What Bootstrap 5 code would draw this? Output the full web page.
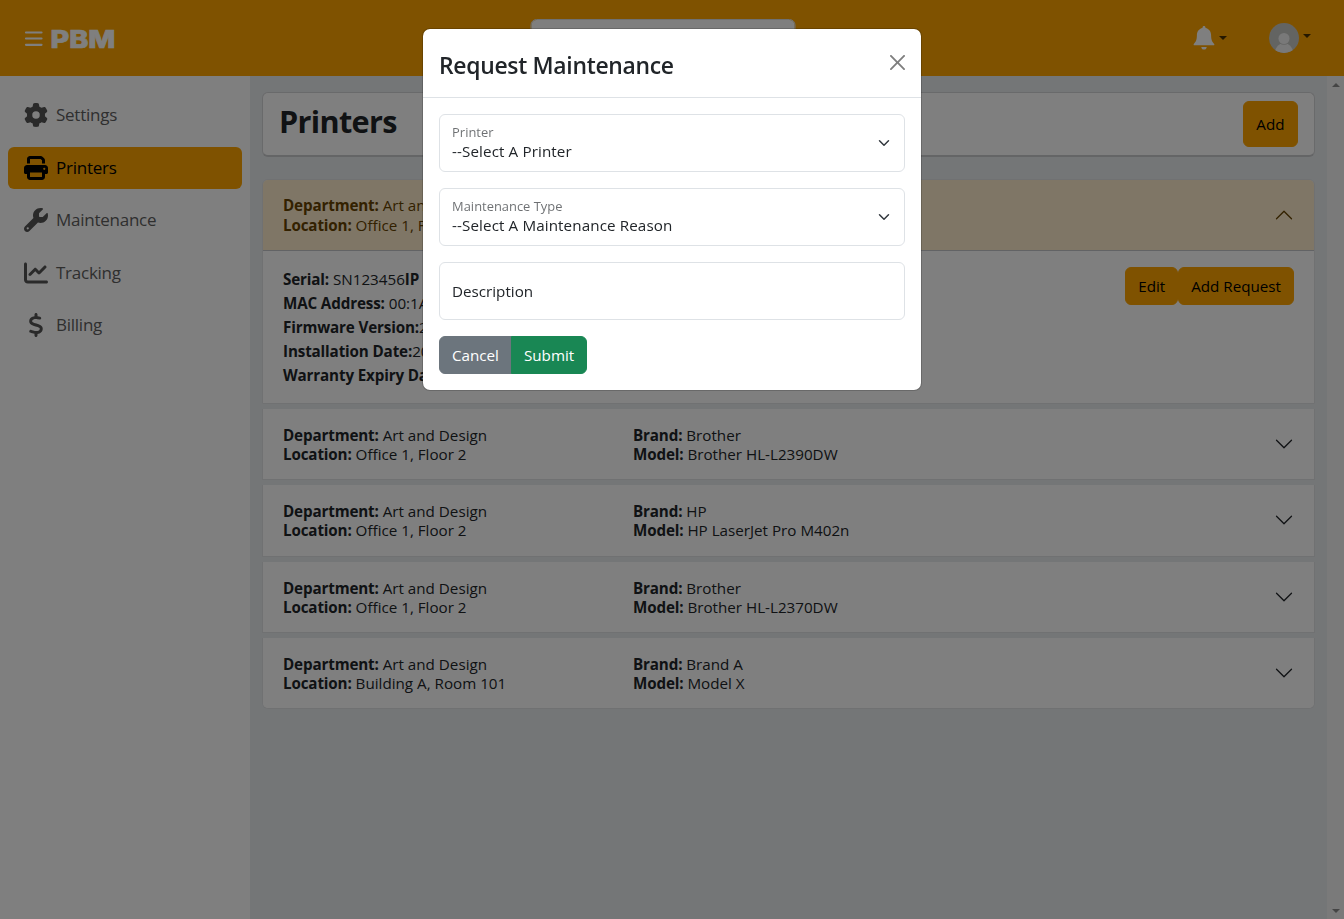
<!DOCTYPE html>
<html lang="en">
<head>
<meta charset="utf-8">
<meta name="viewport" content="width=device-width, initial-scale=1">
<title>PBM - Printers</title>
<link href="https://cdn.jsdelivr.net/npm/bootstrap@5.3.0/dist/css/bootstrap.min.css" rel="stylesheet">
<style>
  body { font-family: "Open Sans", "Noto Sans", sans-serif; font-size: 15.2px; line-height: 24px; overflow: hidden; color: #212529; }
  .topbar { height: 76px; background: #ffa500; padding-left: 24px; padding-right: 33px; }
  .search-box { width: 265px; height: 38px; margin-left: -9.500px; }
  .logo { overflow: visible; }
  .caret { border: 4px solid transparent; border-top-color: #4a3000; border-bottom: 0; }
  .side { width: 250px; padding: 18px 8px 0; }
  .side .nav-link { display: flex; align-items: center; gap: 8px; height: 42.5px; margin-bottom: 10px; padding: 0 16px; font-size: 17px; letter-spacing: -.25px; color: #5e5e5e; border-radius: 6px; }
  .side .nav-link span { line-height: 26px; }
  .side .nav-link svg { fill: #555; flex: none; }
  .side .nav-link.active { background: #ffa500; color: #000; }
  .side .nav-link.active svg { fill: #000; }
  .content { background: #e9ecef; padding: 16px 12px; }
  .title-card { height: 64.5px; padding: 0 16px; border: 1px solid #d3d4d6; border-bottom: 2px solid #c9cacc; margin-bottom: 22.5px; }
  .title-card h1 { font-size: 30.6px; font-weight: 700; line-height: 38px; margin: -6px 0 0; letter-spacing: -.65px; }
  .btn-brand { --bs-btn-font-size: 15.2px; --bs-btn-bg: #ffa500; --bs-btn-color: #000; --bs-btn-border-color: #ffa500; line-height: 24px; }
  .btn-add { height: 46px; padding: 0 12.500px; }
  .accordion { --bs-accordion-active-bg: #ffedcc; --bs-accordion-active-color: #664200; --bs-accordion-border-color: #e0e2e5; --bs-accordion-btn-color: #212529; }
  .accordion-item { margin-bottom: 5px; }
  .accordion b { letter-spacing: -.14px; }
  .accordion-button { font-size: 15.2px; line-height: 19.2px; }
  .accordion-button > span { position: relative; top: 1px; }
  .accordion-item:first-of-type .accordion-button { padding-bottom: 17px; }
  .accordion-item:first-of-type .accordion-body { padding-bottom: 15.400px; }
  .accordion-item:first-of-type .accordion-button > span { top: .3px; }
  .accordion-button:not(.collapsed) { box-shadow: inset 0 -1px 0 #c4c6ca; }
  .accordion-button:not(.collapsed)::after { background-image: url("data:image/svg+xml,%3csvg xmlns='http://www.w3.org/2000/svg' viewBox='0 0 16 16' fill='%23664200'%3e%3cpath fill-rule='evenodd' d='M1.646 4.646a.5.5 0 0 1 .708 0L8 10.293l5.646-5.647a.5.5 0 0 1 .708.708l-6 6a.5.5 0 0 1-.708 0l-6-6a.5.5 0 0 1 0-.708z'/%3e%3c/svg%3e"); }
  .info-col { width: 350px; }
  .scroll-track { width: 17px; background: #f5f5f5; padding: 7px 0 6px; }
  .arrow-up { border: 4px solid transparent; border-bottom-color: #8b8b8b; border-top: 0; }
  .arrow-down { border: 4px solid transparent; border-top-color: #8b8b8b; border-bottom: 0; }
  .modal-title { font-size: 22.9px; line-height: 36px; font-weight: 600; letter-spacing: -.3px; padding-top: 3px; margin-bottom: -3px !important; }
  .modal-content { color: #212529; }
  .form-floating > .form-select { font-size: 15.2px; line-height: 19px; letter-spacing: .11px; }
  .form-floating > label { font-size: 15.2px; }
  .modal .btn { --bs-btn-font-size: 15.2px; line-height: 24px; }
</style>
</head>
<body class="vh-100 d-flex flex-column">
<header class="topbar d-flex align-items-center justify-content-between position-relative">
  <div class="d-flex align-items-center">
    <svg width="19" height="18" viewBox="0 0 19 18" stroke="#fff" stroke-width="2.2" stroke-linecap="round"><path d="M2 3.500h15.500M2 9.500h15.500M2 15.800h15.500"/></svg>
    <svg class="logo ms-2" width="70" height="30" viewBox="0 0 70 30"><text x="-.5" y="24.500" font-family="Inter, sans-serif" font-weight="800" font-size="25" fill="#fff" stroke="#fff" stroke-width=".7" textLength="65" lengthAdjust="spacingAndGlyphs">PBM</text></svg>
  </div>
  <input class="form-control search-box position-absolute top-50 start-50 translate-middle" aria-label="Search">
  <div class="d-flex align-items-center">
    <svg width="22" height="26" viewBox="0 0 22 26" fill="#fff"><path d="M11 1c.9 0 1.500.7 1.500 1.500v.6c3.600.7 5.600 3.600 5.600 7.200 0 5 1.400 7.200 3.100 8.600.4.400.2 1.400-.6 1.400H1.400c-.8 0-1-1-.6-1.400 1.700-1.400 3.100-3.600 3.100-8.600 0-3.600 2-6.500 5.600-7.200v-.6C9.500 1.700 10.100 1 11 1zM8.300 22h5.400c0 1.600-1.200 2.600-2.700 2.600S8.300 23.600 8.300 22z"/></svg>
    <span class="caret ms-1"></span>
    <svg style="margin-left:42px" width="30" height="30" viewBox="0 0 30 30"><defs><clipPath id="avatar"><circle cx="15" cy="15" r="15"/></clipPath></defs><g clip-path="url(#avatar)"><path fill="#c7c8c5" d="M0 0h30v30H0z"/><ellipse cx="15" cy="29" rx="8.800" ry="9" fill="#f3f3f3"/><circle cx="15" cy="15.500" r="6.300" fill="#c7c8c5"/><circle cx="15" cy="15.500" r="5.500" fill="#f3f3f3"/></g></svg>
    <span class="caret ms-1 mb-1"></span>
  </div>
</header>

<div class="d-flex flex-grow-1">
  <nav class="side bg-white nav flex-column flex-nowrap">
    <a class="nav-link" href="#"><svg width="24" height="24" viewBox="0 0 512 512"><path d="M495.900 166.600c3.200 8.700.5 18.400-6.400 24.600l-43.300 39.400c1.100 8.300 1.700 16.800 1.700 25.400s-.6 17.100-1.700 25.400l43.300 39.400c6.900 6.200 9.600 15.900 6.400 24.600-4.400 11.900-9.700 23.300-15.800 34.300l-4.700 8.100c-6.600 11-14 21.400-22.100 31.200-5.900 7.200-15.700 9.600-24.500 6.800l-55.700-17.700c-13.400 10.300-28.200 18.900-44 25.400l-12.500 57.100c-2 9.100-9 16.300-18.200 17.800-13.800 2.300-28 3.500-42.500 3.500s-28.700-1.200-42.500-3.500c-9.200-1.500-16.200-8.700-18.200-17.800l-12.500-57.100c-15.800-6.500-30.600-15.100-44-25.400l-55.600 17.800c-8.800 2.800-18.600.3-24.500-6.800-8.100-9.800-15.500-20.200-22.100-31.200l-4.700-8.100c-6.100-11-11.400-22.400-15.800-34.300-3.200-8.700-.5-18.400 6.400-24.600l43.300-39.400C64.600 273.100 64 264.600 64 256s.6-17.100 1.700-25.400l-43.300-39.400c-6.900-6.200-9.600-15.900-6.400-24.600 4.400-11.900 9.700-23.300 15.800-34.300l4.700-8.100c6.600-11 14-21.400 22.100-31.200 5.900-7.200 15.700-9.600 24.500-6.800l55.700 17.700c13.400-10.300 28.200-18.900 44-25.400l12.500-57.100c2-9.100 9-16.300 18.200-17.800C227.300 1.200 241.500 0 256 0s28.700 1.200 42.500 3.500c9.200 1.500 16.200 8.700 18.200 17.800l12.500 57.100c15.800 6.500 30.600 15.100 44 25.400l55.700-17.700c8.800-2.800 18.600-.3 24.500 6.800 8.100 9.800 15.500 20.200 22.100 31.200l4.700 8.100c6.100 11 11.400 22.400 15.700 34.400zM256 336a80 80 0 1 0 0-160 80 80 0 1 0 0 160z"/></svg><span>Settings</span></a>
    <a class="nav-link active" href="#"><svg width="24" height="24" viewBox="0 0 512 512"><path d="M128 0C92.700 0 64 28.700 64 64v96h64V64h226.700L384 93.300V160h64V93.300c0-17-6.700-33.300-18.700-45.300L400 18.700C388 6.700 371.700 0 354.700 0H128zM384 352v96H128v-96h256zm64 32h32c17.700 0 32-14.300 32-32v-96c0-35.300-28.700-64-64-64H64c-35.300 0-64 28.700-64 64v96c0 17.700 14.300 32 32 32h32v64c0 35.300 28.700 64 64 64h256c35.300 0 64-28.700 64-64v-64zM432 248a24 24 0 1 1 0 48 24 24 0 1 1 0-48z"/></svg><span>Printers</span></a>
    <a class="nav-link" href="#"><svg width="24" height="24" viewBox="0 0 512 512"><path d="M352 320c88.400 0 160-71.600 160-160 0-15.300-2.200-30.100-6.200-44.200-3.100-10.800-16.400-13.200-24.300-5.300l-76.800 76.800c-3 3-7.100 4.700-11.300 4.700H336c-8.800 0-16-7.200-16-16v-57.400c0-4.200 1.700-8.300 4.700-11.300l76.800-76.800c7.900-7.900 5.400-21.200-5.300-24.300C382.100 2.200 367.300 0 352 0c-88.400 0-160 71.600-160 160 0 19.100 3.400 37.500 9.500 54.500L19.900 396.100C7.200 408.800 0 426.100 0 444.100 0 481.600 30.400 512 67.900 512c18 0 35.300-7.200 48-19.900l181.600-181.600c17 6.200 35.400 9.500 54.500 9.500zM80 408a24 24 0 1 1 0 48 24 24 0 1 1 0-48z"/></svg><span>Maintenance</span></a>
    <a class="nav-link" href="#"><svg width="24" height="24" viewBox="0 0 512 512"><path d="M64 64c0-17.700-14.300-32-32-32S0 46.300 0 64v336c0 44.200 35.800 80 80 80h400c17.700 0 32-14.300 32-32s-14.300-32-32-32H80c-8.800 0-16-7.200-16-16V64zm406.600 86.600c12.500-12.500 12.500-32.800 0-45.300s-32.800-12.500-45.300 0L320 210.700l-57.400-57.300c-12.500-12.500-32.800-12.500-45.300 0l-112 112c-12.500 12.500-12.500 32.800 0 45.300s32.800 12.500 45.300 0L240 221.300l57.400 57.400c12.500 12.500 32.800 12.500 45.300 0l128-128z"/></svg><span>Tracking</span></a>
    <a class="nav-link" href="#"><svg width="24" height="24" viewBox="-96 0 512 512"><path d="M160 0c17.700 0 32 14.300 32 32v35.700c1.600.2 3.100.4 4.700.7.400.1.700.1 1.100.2l48 8.800c17.400 3.200 28.900 19.900 25.700 37.200s-19.900 28.900-37.200 25.700l-47.500-8.700c-31.300-4.600-58.900-1.500-78.300 6.200s-27.200 18.300-29 28.100c-2 10.700-.5 16.700 1.200 20.400 1.800 3.900 5.500 8.300 12.800 13.200 16.300 10.700 41.300 17.700 73.700 26.300l2.900.8c28.600 7.600 63.600 16.800 89.600 33.800 14.200 9.300 27.600 21.900 35.900 39.500 8.500 17.900 10.300 37.900 6.400 59.200-6.900 38-33.100 63.400-65.600 76.700-13.700 5.600-28.600 9.200-44.400 11V480c0 17.700-14.300 32-32 32s-32-14.300-32-32v-34.900c-.4-.1-.9-.1-1.300-.2h-.2c-24.400-3.800-64.500-14.300-91.500-26.300-16.100-7.200-23.400-26.100-16.200-42.200s26.100-23.400 42.200-16.200c20.900 9.300 55.300 18.500 75.200 21.600 31.900 4.700 58.200 2 76-5.300 16.900-6.900 24.600-16.900 26.800-28.900 1.900-10.600.4-16.700-1.300-20.400-1.900-4-5.600-8.400-13-13.300-16.400-10.700-41.500-17.700-74-26.300l-2.800-.7c-28.500-7.600-63.500-16.900-89.500-33.900-14.200-9.300-27.500-22-35.800-39.600-8.400-17.900-10.100-37.900-6.100-59.200C23.700 116 52.300 91.200 84.800 78.300c13.300-5.300 27.900-8.900 43.200-11V32c0-17.700 14.300-32 32-32z"/></svg><span>Billing</span></a>
  </nav>

  <main class="content flex-grow-1">
    <div class="title-card rounded bg-white d-flex justify-content-between align-items-center">
      <h1>Printers</h1>
      <button class="btn btn-brand btn-add" type="button">Add</button>
    </div>

    <div class="accordion">
      <div class="accordion-item">
        <button class="accordion-button" type="button">
          <span class="info-col"><b>Department:</b> Art and Design<br><b>Location:</b> Office 1, Floor 2</span>
        </button>
        <div class="accordion-body d-flex justify-content-between align-items-start">
          <div>
            <b>Serial:</b> SN123456<b>IP</b><br>
            <b>MAC Address:</b> 00:1A<br>
            <b>Firmware Version:</b>2<br>
            <b>Installation Date:</b>20<br>
            <b>Warranty Expiry Date:</b>
          </div>
          <div class="d-flex"><button class="btn btn-brand" type="button">Edit</button><button class="btn btn-brand" type="button">Add Request</button></div>
        </div>
      </div>
      <div class="accordion-item">
        <button class="accordion-button collapsed" type="button">
          <span class="info-col"><b>Department:</b> Art and Design<br><b>Location:</b> Office 1, Floor 2</span>
          <span><b>Brand:</b> Brother<br><b>Model:</b> Brother HL-L2390DW</span>
        </button>
      </div>
      <div class="accordion-item">
        <button class="accordion-button collapsed" type="button">
          <span class="info-col"><b>Department:</b> Art and Design<br><b>Location:</b> Office 1, Floor 2</span>
          <span><b>Brand:</b> HP<br><b>Model:</b> HP LaserJet Pro M402n</span>
        </button>
      </div>
      <div class="accordion-item">
        <button class="accordion-button collapsed" type="button">
          <span class="info-col"><b>Department:</b> Art and Design<br><b>Location:</b> Office 1, Floor 2</span>
          <span><b>Brand:</b> Brother<br><b>Model:</b> Brother HL-L2370DW</span>
        </button>
      </div>
      <div class="accordion-item">
        <button class="accordion-button collapsed" type="button">
          <span class="info-col"><b>Department:</b> Art and Design<br><b>Location:</b> Building A, Room 101</span>
          <span><b>Brand:</b> Brand A<br><b>Model:</b> Model X</span>
        </button>
      </div>
    </div>
  </main>
  <div class="scroll-track d-flex flex-column align-items-center justify-content-between"><span class="arrow-up"></span><span class="arrow-down"></span></div>
</div>

<div class="modal-backdrop show"></div>
<div class="modal show d-block" tabindex="-1" role="dialog">
  <div class="modal-dialog">
    <div class="modal-content">
      <div class="modal-header">
        <h1 class="modal-title">Request Maintenance</h1>
        <button type="button" class="btn-close" aria-label="Close"></button>
      </div>
      <div class="modal-body">
        <div class="form-floating mb-3">
          <select class="form-select" id="printer"><option>--Select A Printer</option></select>
          <label for="printer">Printer</label>
        </div>
        <div class="form-floating mb-3">
          <select class="form-select" id="reason"><option>--Select A Maintenance Reason</option></select>
          <label for="reason">Maintenance Type</label>
        </div>
        <div class="form-floating mb-3">
          <input class="form-control" id="description" placeholder="Description">
          <label for="description">Description</label>
        </div>
        <div class="btn-group"><button type="button" class="btn btn-secondary">Cancel</button><button type="button" class="btn btn-success">Submit</button></div>
      </div>
    </div>
  </div>
</div>
<script src="https://cdn.jsdelivr.net/npm/bootstrap@5.3.0/dist/js/bootstrap.bundle.min.js"></script>
</body>
</html>
